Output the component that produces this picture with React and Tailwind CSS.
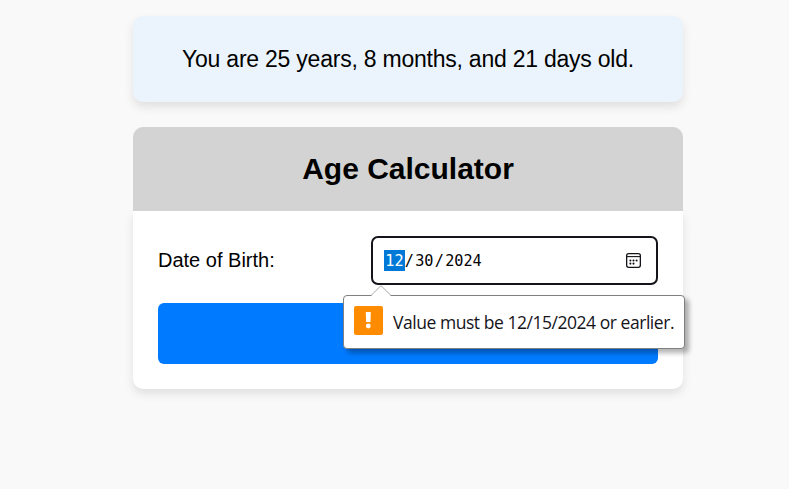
function CalendarIcon() {
  return (
    <svg width="15" height="15" viewBox="0 0 15 15" fill="none" stroke="#15141a" className="shrink-0">
      <rect x="0.65" y="0.65" width="13.7" height="13.7" rx="2" strokeWidth="1.3" />
      <path d="M1 3.6H14" strokeWidth="1.1" />
      <g fill="#15141a" stroke="none">
        <circle cx="4.4" cy="7.5" r="1.05" />
        <circle cx="7.5" cy="7.5" r="1.05" />
        <circle cx="10.6" cy="7.5" r="1.05" />
        <circle cx="4.4" cy="10.6" r="1.05" />
        <circle cx="7.5" cy="10.6" r="1.05" />
      </g>
    </svg>
  );
}

function WarningIcon() {
  return (
    <svg width="29" height="29" viewBox="0 0 29 29" className="shrink-0">
      <rect width="29" height="29" rx="2" fill="#ff8c00" />
      <path d="M11.8 6H16.8L16.5 16H12.1Z" fill="#fff" />
      <circle cx="14.3" cy="20" r="2.4" fill="#fff" />
    </svg>
  );
}

function ValidationPopup() {
  return (
    <div className="absolute -left-[28px] top-[59px] z-10 flex h-[54px] w-[342px] items-center rounded-[4px] border border-[#808080] bg-white pl-[10px] shadow-[4px_4px_5px_rgba(0,0,0,0.3)]">
      <svg width="20" height="11" viewBox="0 0 20 11" className="absolute -top-[11px] left-[27px]">
        <path d="M0 11L10 1L20 11Z" fill="#fff" />
        <path d="M0 10.5L10 0.7L20 10.5" fill="none" stroke="#aaa" />
      </svg>
      <div className="-mt-[3px] flex">
        <WarningIcon />
      </div>
      <span className="ml-[10px] whitespace-nowrap font-['Open_Sans','Noto_Sans',sans-serif] text-[17.5px] tracking-[-0.46px] text-[#15141a]">
        Value must be 12/15/2024 or earlier.
      </span>
    </div>
  );
}

export default function App() {
  return (
    <div className="h-[489px] w-[789px] overflow-hidden bg-[#f9f9f9] pl-[133px] pt-4 font-['Liberation_Sans',Arial,sans-serif] text-black">
      <div className="flex w-[550px] flex-col">
        <div className="flex h-[86px] items-center justify-center rounded-[10px] bg-[#ebf4fc] text-[23px] tracking-[-0.23px] shadow-[0_5px_10px_rgba(0,0,0,0.1)]">
          <p className="whitespace-nowrap">You are 25 years, 8 months, and 21 days old.</p>
        </div>

        <h1 className="z-10 mt-[25px] flex h-[84px] items-center justify-center rounded-t-[10px] bg-[#d3d3d3] pb-[2px] text-[30px] font-bold">
          Age Calculator
        </h1>

        <form className="h-[178px] rounded-b-[10px] bg-white px-[25px] pt-[25px] shadow-[0_5px_10px_rgba(0,0,0,0.1)]">
          <div className="flex items-center justify-between">
            <label className="pb-[2px] text-[20px]">Date of Birth:</label>
            <div className="relative h-[49px] w-[287px]">
              <div className="flex h-full items-center justify-between rounded-[7px] border-2 border-[#15141a] bg-white pl-[11px] pr-[15px] font-['DejaVu_Sans_Mono',monospace] text-[15.2px]">
                <div className="flex items-center leading-[19px]">
                  <span className="bg-[#0078d7] px-[1.25px] pt-[2px] text-white">12</span>
                  <span className="pt-[2px]">/</span>
                  <span className="px-[1.25px] pt-[2px]">30</span>
                  <span className="pt-[2px]">/</span>
                  <span className="px-[1.25px] pt-[2px]">2024</span>
                </div>
                <CalendarIcon />
              </div>
              <ValidationPopup />
            </div>
          </div>
          <button type="button" aria-label="Calculate" className="mt-[18px] block h-[61px] w-full rounded-[6px] bg-[#007bff]" />
        </form>
      </div>
    </div>
  );
}
